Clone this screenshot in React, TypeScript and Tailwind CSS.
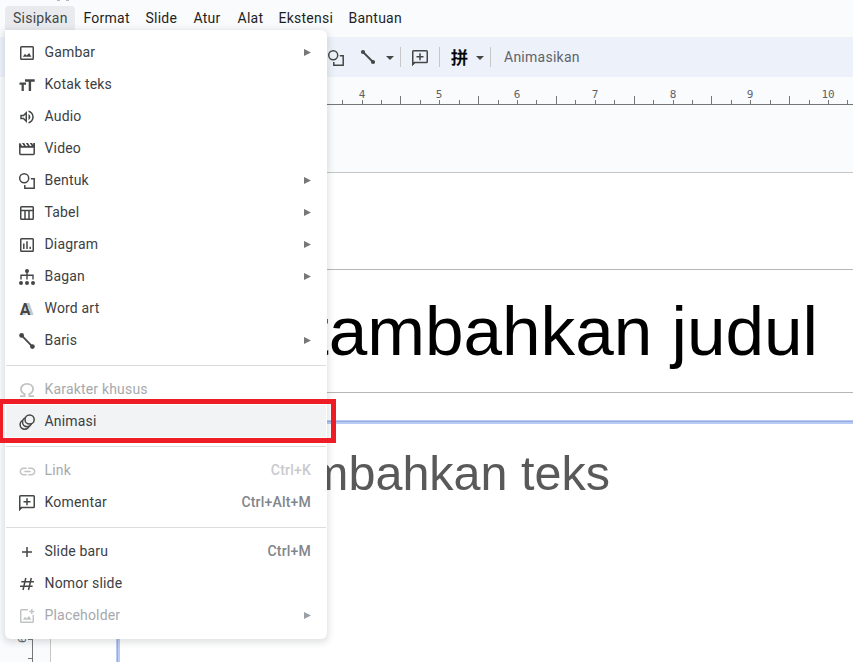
import React from 'react';
import { MdLink, MdOutlineVolumeUp } from 'react-icons/md';

type IconProps = { children: React.ReactNode };

const Glyph = ({ children }: IconProps) => (
  <svg className="block h-4 w-4 overflow-visible" viewBox="0 0 16 16" fill="none" stroke="currentColor" strokeWidth="1.5">
    {children}
  </svg>
);

const ImageIcon = () => (
  <Glyph>
    <rect x="1.75" y="1.75" width="12.5" height="12.5" rx="0.8" />
    <path d="M3.8 11.8 6 8.7l1.5 1.9L10.2 8l2.2 3.8z" fill="currentColor" stroke="none" />
  </Glyph>
);
const TextIcon = () => (
  <Glyph>
    <path d="M.5 6.7H7M3.7 6.7V14" strokeWidth="2.2" />
    <path d="M6 3.5h9.7M10.9 3.5V14" strokeWidth="2.4" />
  </Glyph>
);
const AudioIcon = () => <MdOutlineVolumeUp className="h-[18px] w-[18px] shrink-0" />;
const VideoIcon = () => (
  <Glyph>
    <path d="M.8 5v7.6c0 .5.3.8.8.8h12.8c.5 0 .8-.3.8-.8V5" />
    <path d="M0 2.4 1.2 2l1.9 3h1.8L3 2h2.1L7 5h1.8L6.9 2H9l1.9 3h1.8l-1.9-3H13l1.2 1.9V2H16v4.8H0z" fill="currentColor" stroke="none" />
  </Glyph>
);
const ShapeIcon = () => (
  <Glyph>
    <circle cx="5.2" cy="5.2" r="4.5" />
    <path d="M11.8 5.8h3.4v9.4H5.8V12" />
  </Glyph>
);
const TableIcon = () => (
  <Glyph>
    <rect x="1.75" y="1.75" width="12.5" height="12.5" rx="0.8" />
    <path d="M1.5 5.5h13M6 5.5V14M10 5.5V14" />
  </Glyph>
);
const ChartIcon = () => (
  <Glyph>
    <rect x="1.75" y="1.75" width="12.5" height="12.5" rx="0.8" />
    <path d="M4.8 6.5V12M8 4.2V12M11.2 9.7V12" />
  </Glyph>
);
const OrgIcon = () => (
  <Glyph>
    <g fill="currentColor" stroke="none">
      <circle cx="8" cy="2" r="2" />
      <circle cx="2" cy="14" r="2" />
      <circle cx="8" cy="14" r="2" />
      <circle cx="14" cy="14" r="2" />
    </g>
    <path d="M8 2v8.5M2 10.5V6.2h12v4.3" strokeWidth="1.4" />
  </Glyph>
);
const WordArtIcon = () => (
  <Glyph>
    <g stroke="none" fontFamily="Roboto, sans-serif" fontWeight="700" fontSize="16">
      <text x="3.8" y="14" fill="#c4c7c5">A</text>
      <text x="0.8" y="14" fill="currentColor">A</text>
    </g>
  </Glyph>
);
const LineIcon = () => (
  <Glyph>
    <path d="m2.6 2.4 10.8 11.2" strokeWidth="1.8" />
    <g fill="currentColor" stroke="none">
      <circle cx="2.6" cy="2.4" r="2.4" />
      <circle cx="13.4" cy="13.6" r="2.4" />
    </g>
  </Glyph>
);
const ToolbarLineIcon = () => (
  <Glyph>
    <path d="m3 3 10 10" strokeWidth="1.8" />
    <g fill="currentColor" stroke="none">
      <circle cx="3" cy="3" r="2.1" />
      <circle cx="13" cy="13" r="2.1" />
    </g>
  </Glyph>
);
const OmegaIcon = () => (
  <Glyph>
    <path d="M1 14.1h4.6v-2C3.5 11.2 2 9.5 2 7.1 2 3.9 4.6 1.8 8 1.8s6 2.1 6 5.3c0 2.4-1.5 4.1-3.6 5v2H15" strokeWidth="1.8" />
  </Glyph>
);
const MotionIcon = () => (
  <Glyph>
    <g className="fill-[#f1f3f4]">
      <circle cx="5.7" cy="10.6" r="4.6" />
      <circle cx="8.1" cy="8.1" r="4.6" />
      <circle cx="10.6" cy="5.5" r="4.6" />
    </g>
  </Glyph>
);
const LinkIcon = () => <MdLink className="h-[19px] w-[19px] shrink-0" />;
const CommentIcon = () => (
  <Glyph>
    <path d="M.75 14.2V1.6c0-.5.3-.8.8-.8h12.9c.5 0 .8.3.8.8v10.2c0 .5-.3.8-.8.8H2.4z" />
    <path d="M0 13v3l3-3zM0 12h2v1" fill="currentColor" stroke="none" />
    <path d="M8 3.2v7M4.5 6.7h7" />
  </Glyph>
);
const PlusIcon = () => (
  <Glyph>
    <path d="M8 3v10M3 8h10" />
  </Glyph>
);
const HashIcon = () => (
  <Glyph>
    <path d="M6.8 2 4 14M12.3 2 9.5 14M2.3 5.8h12.6M1 10.3h12.6" />
  </Glyph>
);
const PlaceholderIcon = () => (
  <Glyph>
    <path d="M9 1.75H2.5c-.5 0-.75.3-.75.75v11c0 .5.3.75.75.75h11c.5 0 .75-.3.75-.75V7" />
    <path d="M3.8 11.8 6 8.7l1.5 1.9L10.2 8l2.2 3.8z" fill="currentColor" stroke="none" />
    <path d="M12.8 1v5M10.3 3.5h5" />
  </Glyph>
);

type Item = {
  label: string;
  icon: () => React.ReactElement;
  submenu?: boolean;
  shortcut?: string;
  disabled?: boolean;
  active?: boolean;
};

const groups: Item[][] = [
  [
    { label: 'Gambar', icon: ImageIcon, submenu: true },
    { label: 'Kotak teks', icon: TextIcon },
    { label: 'Audio', icon: AudioIcon },
    { label: 'Video', icon: VideoIcon },
    { label: 'Bentuk', icon: ShapeIcon, submenu: true },
    { label: 'Tabel', icon: TableIcon, submenu: true },
    { label: 'Diagram', icon: ChartIcon, submenu: true },
    { label: 'Bagan', icon: OrgIcon, submenu: true },
    { label: 'Word art', icon: WordArtIcon },
    { label: 'Baris', icon: LineIcon, submenu: true },
  ],
  [
    { label: 'Karakter khusus', icon: OmegaIcon, disabled: true },
    { label: 'Animasi', icon: MotionIcon, active: true },
  ],
  [
    { label: 'Link', icon: LinkIcon, shortcut: 'Ctrl+K', disabled: true },
    { label: 'Komentar', icon: CommentIcon, shortcut: 'Ctrl+Alt+M' },
  ],
  [
    { label: 'Slide baru', icon: PlusIcon, shortcut: 'Ctrl+M' },
    { label: 'Nomor slide', icon: HashIcon },
    { label: 'Placeholder', icon: PlaceholderIcon, submenu: true, disabled: true },
  ],
];

const MenuRow = ({ item }: { item: Item }) => {
  const Icon = item.icon;
  return (
    <div className={`flex h-8 items-center pl-[13px] pr-[15px] ${item.active ? 'bg-[#f1f3f4]' : ''}`}>
      <span className={`mt-0.5 flex h-4 w-4 shrink-0 items-center justify-center ${item.disabled ? 'text-[#c2c3c4]' : 'text-[#444746]'}`}>
        <Icon />
      </span>
      <span className={`ml-[9.5px] flex-1 tracking-[0.18px] ${item.disabled ? 'text-[#a6a9ac]' : 'text-[#3c4043]'}`}>{item.label}</span>
      {item.shortcut && (
        <span className={`font-medium tracking-[0.2px] ${item.disabled ? 'text-[#c9cacc]' : 'text-[#80868b]'}`}>{item.shortcut}</span>
      )}
      {item.submenu && (
        <svg className={`mt-px h-[7px] w-[7px] ${item.disabled ? 'text-[#9aa0a6]' : 'text-[#777]'}`} viewBox="0 0 7 7" fill="currentColor">
          <path d="M0 0 7 3.5 0 7z" />
        </svg>
      )}
    </div>
  );
};

const Caret = () => (
  <svg className="h-1 w-2 text-[#444746]" viewBox="0 0 8 4" fill="currentColor">
    <path d="M0 0h8L4 4z" />
  </svg>
);
const Divider = () => <div className="h-5 w-px bg-[#c7c7c7]" />;

const ticks = [342, 362, 381, 400, 420, 439, 459, 478, 498, 517, 536, 556, 575, 595, 614, 634, 653, 673, 692, 711, 731, 750, 770, 789, 809, 828, 847];
const labels: [string, number][] = [['4', 362], ['5', 439], ['6', 517], ['7', 595], ['8', 673], ['9', 750], ['10', 828]];

const Ruler = () => (
  <svg className="block h-7 w-full" viewBox="0 0 853 28" shapeRendering="crispEdges">
    <rect x="50" y="27" width="803" height="1" fill="#747775" />
    {ticks.map((x, i) => (
      <rect key={x} x={x} y={i % 4 === 3 ? 19 : 23} width="1" height={i % 4 === 3 ? 8 : 4} fill="#747775" />
    ))}
    {labels.map(([n, x]) => (
      <text key={n} x={x} y="21" textAnchor="middle" fontSize="11" fill="#5f6368" fontFamily="'DejaVu Sans Mono', monospace">
        {n}
      </text>
    ))}
  </svg>
);

export default function App() {
  return (
    <div className="relative flex h-[662px] w-[853px] flex-col overflow-hidden bg-[#f9fbfd] font-['Roboto',sans-serif] text-sm">
      <div className="flex h-px gap-[6px] pl-[57px]">
        <span className="w-[3px] bg-[#b5b8bb]" />
        <span className="w-[3px] bg-[#b5b8bb]" />
      </div>
      <nav className="mt-[5px] flex h-6 shrink-0 items-center pl-[5px] tracking-[0.25px] text-[#1f1f1f]">
        <span className="h-6 w-[70px] rounded-t bg-[#e8eaed] pl-2 leading-6 text-[#444746]">Sisipkan</span>
        <span className="w-[62px] pl-[8.5px]">Format</span>
        <span className="w-12 pl-[8.5px]">Slide</span>
        <span className="w-11 pl-[8.5px]">Atur</span>
        <span className="w-[41px] pl-[8.5px]">Alat</span>
        <span className="w-[70px] pl-[8.5px]">Ekstensi</span>
        <span className="pl-[8.5px]">Bantuan</span>
      </nav>
      <div className="mt-[7px] flex h-10 shrink-0 items-center bg-[#edf2fa] pl-[328px] text-[#444746]">
        <span className="mt-px"><ShapeIcon /></span>
        <span className="ml-4"><ToolbarLineIcon /></span>
        <span className="ml-[10px] mt-px"><Caret /></span>
        <span className="ml-[6px]"><Divider /></span>
        <span className="ml-[11px] mt-px"><CommentIcon /></span>
        <span className="ml-[11px]"><Divider /></span>
        <span lang="zh-CN" className="-mt-px ml-[11px] w-[18px] font-['Noto_Sans_CJK_SC',sans-serif] text-[17px] font-medium leading-5 text-black [-webkit-text-stroke:0.3px_black]">拼</span>
        <span className="ml-[7px] mt-px"><Caret /></span>
        <span className="ml-[6px]"><Divider /></span>
        <span className="ml-[13px] tracking-[0.25px] text-[#5f6368]">Animasikan</span>
      </div>
      <Ruler />
      <div className="flex min-h-0 flex-1">
        <svg className="h-full w-[50px] shrink-0" viewBox="0 0 50 557" shapeRendering="crispEdges">
          <rect x="32" y="0" width="1" height="557" fill="#747775" />
          <rect x="28" y="534" width="4" height="1" fill="#747775" />
          <rect x="28" y="553" width="4" height="1" fill="#747775" />
          <text transform="translate(26 538) rotate(-90)" fontSize="11" fill="#5f6368" fontFamily="'DejaVu Sans Mono', monospace">6</text>
        </svg>
        <div className="mt-[67px] flex flex-1 flex-col overflow-hidden border-l border-t border-[#c4c7c5] bg-white font-['Liberation_Sans',Arial,sans-serif]">
          <div className="ml-16 mt-24 flex h-[124px] shrink-0 items-center justify-end border-y border-[#b7b7b7] pr-[35px] pt-[2px]">
            <span className="flex w-[490px] justify-end whitespace-nowrap text-[69.3px] leading-none text-black">Klik untuk tambahkan judul</span>
          </div>
          <div className="ml-[65px] mt-[27px] flex flex-1 border-l border-t border-[#b9cbf3]">
            <div className="flex flex-1 border-l border-t border-[#94aee4]">
              <div className="flex flex-1 items-start border-l-2 border-t-2 border-[#b9cbf3] pt-[25px]">
                <span className="flex w-[490px] shrink-0 justify-end whitespace-nowrap text-[48.5px] leading-[48px] text-[#595959]">Klik untuk tambahkan teks</span>
              </div>
            </div>
          </div>
        </div>
      </div>

      <div className="absolute left-[5px] top-[30px] flex h-[609px] w-[322px] flex-col rounded-b-md rounded-tr-md border-x border-transparent bg-white pt-[6px] shadow-[0_2px_6px_2px_rgba(60,64,67,0.15)]">
        {groups.map((group, i) => (
          <React.Fragment key={i}>
            {i > 0 && <div className="mb-[7px] mt-[9px] h-px shrink-0 bg-[#dadce0]" />}
            {group.map((item) => (
              <MenuRow key={item.label} item={item} />
            ))}
          </React.Fragment>
        ))}
      </div>
      <div className="absolute left-0 top-[399px] h-11 w-[336px] border-y-[5px] border-l-[3px] border-r-[5px] border-[#ee1c25]" />
    </div>
  );
}
